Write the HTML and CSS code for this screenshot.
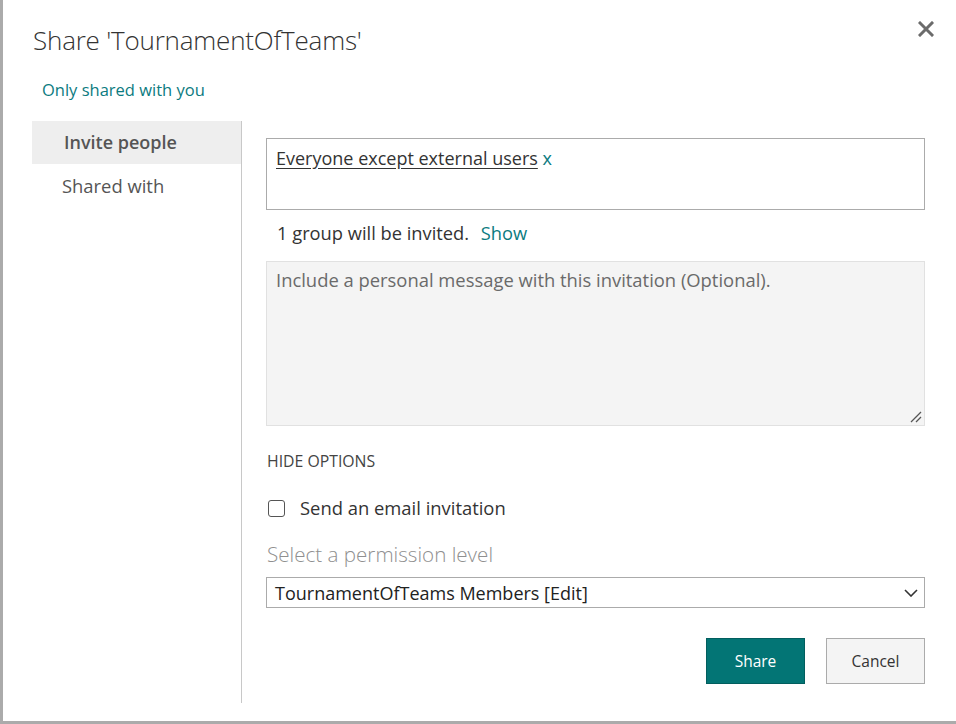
FILE: index.html
```html
<!DOCTYPE html>
<html>
<head>
<meta charset="utf-8">
<link rel="stylesheet" href="styles.css">
</head>
<body>
<div class="frame">
  <div class="frame-mark"></div>
  <div class="dialog">
    <div class="header">
      <h1 class="title">Share 'TournamentOfTeams'</h1>
      <button class="close" aria-label="Close">
        <svg width="16" height="16" viewBox="0 0 16 16"><path d="M2 2 L14 14 M14 2 L2 14" stroke="#6b6b6b" stroke-width="3" stroke-linecap="square"/></svg>
      </button>
    </div>
    <div class="sharing-status">Only shared with you</div>
    <div class="main">
      <nav class="nav">
        <div class="nav-item active">Invite people</div>
        <div class="nav-item">Shared with</div>
      </nav>
      <div class="content">
        <div class="people-box">
          <span class="person">Everyone except external users</span> <span class="remove">x</span>
        </div>
        <div class="invite-count">1 group will be invited. <span class="link">Show</span></div>
        <div class="message">
          <span class="placeholder">Include a personal message with this invitation (Optional).</span>
          <svg class="grip" width="12" height="12" viewBox="0 0 12 12"><path d="M1 11 L11 1 M6 11 L11 6" stroke="#555" stroke-width="1.3"/></svg>
        </div>
        <div class="options-toggle">HIDE OPTIONS</div>
        <label class="check-row"><span class="checkbox"></span><span>Send an email invitation</span></label>
        <div class="perm-label">Select a permission level</div>
        <div class="select">
          <span>TournamentOfTeams Members [Edit]</span>
          <svg width="14" height="8" viewBox="0 0 14 8"><path d="M1 1 L7 7 L13 1" fill="none" stroke="#333" stroke-width="1.6"/></svg>
        </div>
        <div class="buttons">
          <button class="btn primary">Share</button>
          <button class="btn">Cancel</button>
        </div>
      </div>
    </div>
  </div>
</div>
</body>
</html>
```
FILE: styles.css
```css
* { box-sizing: border-box; }
html, body { margin: 0; padding: 0; background: #fff; }
body { font-family: "Open Sans", "Noto Sans", sans-serif; color: #333; }

.frame {
  position: relative;
  width: 956px;
  height: 724px;
  border-left: 3px solid #ababab;
  border-bottom: 3px solid #ababab;
  overflow: hidden;
}
.frame-mark {
  position: absolute;
  left: -3px;
  top: 0;
  width: 3px;
  height: 52px;
  background: #5a5a5a;
}
.dialog { height: 100%; display: flex; flex-direction: column; }

.header { position: relative; padding: 22px 0 0 30px; }
.title {
  margin: 0;
  font-weight: 300;
  font-size: 26px;
  line-height: 36px;
  color: #333;
  letter-spacing: -0.2px;
}
.close {
  position: absolute;
  right: 22px;
  top: 21px;
  border: 0;
  background: none;
  padding: 0;
  width: 16px;
  height: 16px;
}
.close svg { display: block; }

.sharing-status {
  margin: 22px 0 0 39px;
  font-size: 16.5px;
  line-height: 20px;
  color: #0c7b7f;
}

.main { display: flex; margin-top: 21px; }
.nav {
  width: 210px;
  margin-left: 29px;
  border-right: 1px solid #c8c8c8;
  height: 582px;
}
.nav-item {
  height: 43px;
  line-height: 43px;
  font-size: 18.4px;
  color: #555;
  padding-left: 30px;
}
.nav-item.active { background: #eeeeee; font-weight: 600; padding-left: 32px; font-size: 18px; }

.content { width: 659px; margin-left: 24px; padding-top: 17px; }
.people-box {
  height: 72px;
  border: 1px solid #ababab;
  padding: 7px 9px;
  font-size: 18px;
  line-height: 24px;
}
.person { color: #333; text-decoration: underline; text-underline-offset: 3px; }
.remove { color: #0c7b7f; }
.invite-count {
  margin: 11px 0 0 11px;
  font-size: 18.3px;
  line-height: 24px;
  color: #333;
}
.link { color: #0c7b7f; margin-left: 7px; }
.message {
  position: relative;
  margin-top: 16px;
  height: 165px;
  background: #f4f4f4;
  border: 1px solid #e1e1e1;
  padding: 6px 9px;
  font-size: 18.4px;
  line-height: 24px;
}
.placeholder { color: #6a6a6a; }
.grip { position: absolute; right: 2px; bottom: 2px; }
.options-toggle {
  margin: 25px 0 0 1px;
  font-size: 15.8px;
  line-height: 20px;
  color: #444;
}
.check-row {
  display: flex;
  align-items: center;
  gap: 15px;
  margin: 25px 0 0 2px;
  font-size: 18.4px;
  line-height: 24px;
  color: #333;
}
.checkbox {
  width: 17px;
  height: 17px;
  border: 1px solid #555;
  border-radius: 3px;
}
.perm-label {
  margin: 21px 0 0 1px;
  font-size: 20.6px;
  line-height: 26px;
  font-weight: 300;
  color: #8f8f8f;
}
.select {
  margin-top: 10px;
  height: 31px;
  border: 1px solid #ababab;
  display: flex;
  align-items: center;
  justify-content: space-between;
  padding: 0 6px 0 8px;
  font-size: 18px;
  color: #222;
}
.buttons { display: flex; justify-content: flex-end; gap: 21px; margin-top: 30px; }
.btn {
  width: 99px;
  height: 46px;
  font-family: inherit;
  font-size: 15.5px;
  border: 1px solid #ababab;
  background: #f4f4f4;
  color: #333;
  padding: 0;
}
.btn.primary { background: #037575; border-color: #025e5e; color: #fff; }
```
